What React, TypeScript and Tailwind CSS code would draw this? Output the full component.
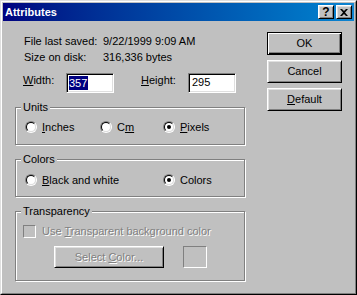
import React from 'react';

const raised =
  'border border-t-white border-l-white border-b-black border-r-black shadow-[inset_1px_1px_0_#dfdfdf,inset_-1px_-1px_0_#808080]';
const sunken =
  'border border-t-[#808080] border-l-[#808080] border-b-white border-r-white shadow-[inset_1px_1px_0_#000,inset_-1px_-1px_0_#dfdfdf]';
const etched = 'border border-[#808080] shadow-[1px_1px_0_#fff,inset_1px_1px_0_#fff]';
const disabledText = 'text-[#808080] [text-shadow:1px_1px_0_#fff]';

const Radio = ({ checked }: { checked?: boolean }) => (
  <span className="flex w-[12px] h-[12px] shrink-0 rounded-full border border-t-[#808080] border-l-[#808080] border-b-white border-r-white">
    <span className="flex w-full h-full items-center justify-center rounded-full border border-t-black border-l-black border-b-[#dfdfdf] border-r-[#dfdfdf] bg-white">
      {checked && <span className="w-[4px] h-[4px] rounded-full bg-black" />}
    </span>
  </span>
);

const Option = ({ children, checked, width }: { children: React.ReactNode; checked?: boolean; width: string }) => (
  <div className={`flex items-center gap-[5px] h-[16px] ${width}`}>
    <Radio checked={checked} />
    <span className="leading-[13px]">{children}</span>
  </div>
);

const Group = ({ label, className, children }: { label: string; className: string; children: React.ReactNode }) => (
  <div className={`relative w-[230px] ${etched} ${className}`}>
    <span className="absolute -top-[7px] left-[5px] px-[2px] leading-[13px] bg-[#c0c0c0]">{label}</span>
    {children}
  </div>
);

const DialogButton = ({ children, isDefault }: { children: React.ReactNode; isDefault?: boolean }) => (
  <button
    className={
      isDefault
        ? 'w-[75px] h-[23px] border border-black shadow-[inset_1px_1px_0_#fff,inset_-1px_-1px_0_#000,inset_-2px_-2px_0_#808080] leading-[13px]'
        : `w-[75px] h-[23px] ${raised} leading-[13px]`
    }
  >
    {children}
  </button>
);

export default function App() {
  return (
    <div className="w-[357px] h-[295px] bg-[#c0c0c0] text-[11px] text-black font-['Liberation_Sans',Arial,sans-serif] border border-t-[#dfdfdf] border-l-[#dfdfdf] border-b-black border-r-black">
      <div className="h-full border border-t-white border-l-white border-b-[#808080] border-r-[#808080] p-[1px]">
        <div className="flex items-center h-[18px] pl-[2px] pr-[2px] bg-gradient-to-r from-[#000080] to-[#1084d0]">
          <span className="flex-1 font-bold text-white leading-[13px]">Attributes</span>
          <div className={`flex items-center justify-center w-[16px] h-[14px] bg-[#c0c0c0] ${raised} font-bold text-[12px] leading-[11px]`}>?</div>
          <div className={`ml-[2px] flex items-center justify-center w-[16px] h-[14px] bg-[#c0c0c0] ${raised}`}>
            <svg width="8" height="7" viewBox="0 0 8 7">
              <path d="M0 0h2l2 2 2-2h2L5 3.5 8 7H6L4 5 2 7H0l3-3.5z" fill="#000" />
            </svg>
          </div>
        </div>

        <div className="flex">
          <div className="ml-[12px] w-[231px]">
            <div className="mt-[12px] pl-[9px]">
              <div className="flex leading-[16px]">
                <span className="w-[79px]">File last saved:</span>
                <span>9/22/1999 9:09 AM</span>
              </div>
              <div className="flex leading-[16px]">
                <span className="w-[79px]">Size on disk:</span>
                <span>316,336 bytes</span>
              </div>
            </div>

            <div className="flex items-start mt-[8px] pl-[8px] h-[20px]">
              <span className="w-[43px] leading-[13px] pt-[1px]">
                <u>W</u>idth:
              </span>
              <div className={`w-[48px] h-[20px] bg-white ${sunken} pl-[2px] pt-[1px]`}>
                <span className="bg-[#000080] text-white leading-[14px] inline-block pr-[1px]">357</span>
              </div>
              <span className="ml-[27px] w-[47px] leading-[13px] pt-[1px]">
                <u>H</u>eight:
              </span>
              <div className={`w-[48px] h-[20px] bg-white ${sunken} pl-[3px] pt-[1px] leading-[14px]`}>295</div>
            </div>

            <Group label="Units" className="mt-[14px] h-[38px] pl-[9px] pt-[11px]">
              <div className="flex">
                <Option width="w-[75px]">
                  <u>I</u>nches
                </Option>
                <Option width="w-[63px]">
                  C<u>m</u>
                </Option>
                <Option width="w-[70px]" checked>
                  <u>P</u>ixels
                </Option>
              </div>
            </Group>

            <Group label="Colors" className="mt-[14px] h-[38px] pl-[9px] pt-[12px]">
              <div className="flex">
                <Option width="w-[138px]">
                  <u>B</u>lack and white
                </Option>
                <Option width="w-[70px]" checked>
                  Colors
                </Option>
              </div>
            </Group>

            <Group label="Transparency" className="mt-[14px] h-[70px] pl-[7px] pt-[13px]">
              <div className="flex items-center gap-[6px] h-[13px]">
                <span className="w-[13px] h-[13px] border border-t-[#808080] border-l-[#808080] border-b-white border-r-white bg-[#c0c0c0]" />
                <span className={`leading-[13px] ${disabledText}`}>
                  Use <u>T</u>ransparent background color
                </span>
              </div>
              <div className="flex mt-[8px] ml-[31px]">
                <div className={`flex items-center justify-center w-[110px] h-[22px] ${raised}`}>
                  <span className={`leading-[13px] ${disabledText}`}>
                    Select <u>C</u>olor...
                  </span>
                </div>
                <div className="ml-[19px] w-[24px] h-[22px] border border-t-[#808080] border-l-[#808080] border-b-white border-r-white" />
              </div>
            </Group>
          </div>

          <div className="ml-[21px] mt-[11px] flex flex-col gap-[5px]">
            <DialogButton isDefault>OK</DialogButton>
            <DialogButton>Cancel</DialogButton>
            <DialogButton>
              <u>D</u>efault
            </DialogButton>
          </div>
        </div>
      </div>
    </div>
  );
}
